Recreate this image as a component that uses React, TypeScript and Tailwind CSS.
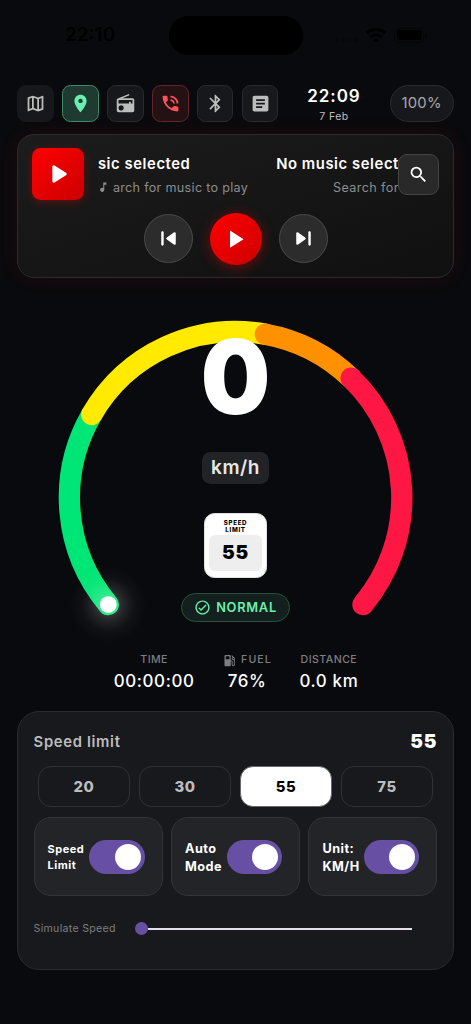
import { useState, type ReactNode } from 'react';
import clsx from 'clsx';
import {
  MdArticle,
  MdBluetooth,
  MdLocationOn,
  MdMusicNote,
  MdOutlineMap,
  MdPhoneInTalk,
  MdRadio,
  MdSearch,
} from 'react-icons/md';

const TILE_TONES = {
  plain: 'bg-[#17181b] border-[#17181b] text-[#bdbdbd]',
  default: 'bg-[#17181b] border-[#2a2b2e] text-[#bdbdbd]',
  green: 'bg-[#1f3a30] border-[#3f8a66] text-[#69f0ae]',
  red: 'bg-[#241114] border-[#66242a] text-[#ff5252]',
};

const SEGMENTS = [
  { from: 140, to: 210, color: '#00e676' },
  { from: 210, to: 280.3, color: '#ffea00' },
  { from: 280.3, to: 314, color: '#ff9100' },
  { from: 314, to: 400, color: '#ff1744' },
];

const CENTER = { x: 235.6, y: 219.7 };
const RADIUS = 166.2;

function point(deg: number) {
  const rad = (deg * Math.PI) / 180;
  return { x: CENTER.x + RADIUS * Math.cos(rad), y: CENTER.y + RADIUS * Math.sin(rad) };
}

function arc(from: number, to: number) {
  const a = point(from);
  const b = point(to);
  return `M${a.x} ${a.y}A${RADIUS} ${RADIUS} 0 0 1 ${b.x} ${b.y}`;
}

/* Black-on-dark system status bar */
function StatusBar() {
  return (
    <div className="h-[85px] pt-[15.5px] flex justify-between items-start text-black">
      <div className="w-[151px] pl-[47.5px] h-[39px] flex items-center text-[19px] font-semibold">22:10</div>
      <div className="w-[134px] h-[39px] rounded-full bg-black" />
      <div className="w-[151px] h-[39px] pl-[32px] flex items-center">
        <div className="flex gap-[3px] mt-2.5">
          {[0, 1, 2, 3].map((i) => (
            <span key={i} className="size-[3.5px] rounded-full bg-[#07080a]" />
          ))}
        </div>
        <svg className="ml-[8px] w-[20px] h-[15px]" viewBox="0 0 20 15" fill="none" stroke="currentColor">
          <path d="M1 5.2a13 13 0 0 1 18 0" strokeWidth="3" />
          <path d="M4.6 9a8 8 0 0 1 10.8 0" strokeWidth="2.8" />
          <path d="M10 14.6 6.9 11.5a4.4 4.4 0 0 1 6.2 0z" fill="currentColor" stroke="none" />
        </svg>
        <div className="ml-[8.5px] w-[30px] h-[15px] rounded-[5px] border border-[#050608] p-[1.5px]">
          <div className="h-full rounded-[3px] bg-black" />
        </div>
        <div className="ml-px w-[1.5px] h-[5px] rounded-r-full bg-[#050608]" />
      </div>
    </div>
  );
}

function Tile({ tone = 'default', children }: { tone?: keyof typeof TILE_TONES; children: ReactNode }) {
  return (
    <button
      className={clsx(
        'size-[36.5px] rounded-[8.5px] border flex items-center justify-center text-[21px]',
        TILE_TONES[tone],
      )}
    >
      {children}
    </button>
  );
}

function Toolbar() {
  return (
    <div className="flex items-center justify-between h-[37px]">
      <div className="flex gap-[8.4px]">
        <Tile tone="plain"><MdOutlineMap /></Tile>
        <Tile tone="green"><MdLocationOn /></Tile>
        <Tile><MdRadio /></Tile>
        <Tile tone="red"><MdPhoneInTalk /></Tile>
        <Tile><MdBluetooth /></Tile>
        <Tile><MdArticle /></Tile>
      </div>
      <div className="w-[56px] pt-px flex flex-col items-center whitespace-nowrap">
        <div className="text-[17px] leading-[21px] font-semibold tracking-[0.95px] text-white">22:09</div>
        <div className="mt-[3px] text-[10.5px] leading-[13px] tracking-[0.45px] text-[#bdbdbd]">7 Feb</div>
      </div>
      <div className="w-[64px] h-[37px] rounded-full border border-[#2a2b2e] bg-[#17181b] flex items-center justify-center text-[14.8px] tracking-[0.3px] text-[#a8a9aa]">
        100%
      </div>
    </div>
  );
}

function PlayGlyph({ className }: { className?: string }) {
  return (
    <svg className={className} viewBox="0 0 24 24" fill="currentColor">
      <path d="M8 6.82v10.36c0 .79.87 1.27 1.54.84l8.14-5.18a1 1 0 0 0 0-1.69L9.54 5.98A.998.998 0 0 0 8 6.82z" />
    </svg>
  );
}

function SkipGlyph({ className }: { className?: string }) {
  return (
    <svg className={className} viewBox="0 0 24 24" fill="currentColor">
      <path d="M7 6c.55 0 1 .45 1 1v10c0 .55-.45 1-1 1s-1-.45-1-1V7c0-.55.45-1 1-1zm3.66 6.82 5.77 4.07c.66.47 1.58-.01 1.58-.82V7.93c0-.81-.91-1.28-1.58-.82l-5.77 4.07a1 1 0 0 0 0 1.64z" />
    </svg>
  );
}

function MusicCard() {
  return (
    <div className="mt-[12.4px] h-[144px] rounded-[17px] border-[1.3px] border-[#2b2b2b] bg-linear-to-br from-[#1c1c1c] to-[#101010] px-[13.5px] pt-[13px] shadow-[0_0_18px_1px_rgba(255,0,0,0.09)]">
      <div className="flex items-center h-[52px]">
        <div className="size-[52px] shrink-0 rounded-[8.5px] bg-linear-to-br from-[#ff0000] to-[#cc0000] shadow-[0_2px_9px_rgba(255,0,0,0.3)] flex items-center justify-center text-white">
          <PlayGlyph className="size-[34px]" />
        </div>
        <div className="ml-[14px] pt-[1.5px] w-[300px] shrink-0 overflow-hidden whitespace-nowrap">
          <div className="flex justify-between text-[14.8px] leading-[20px] font-semibold tracking-[0.58px] text-white">
            <span>sic selected</span>
            <span className="-mr-px">No music select</span>
          </div>
          <div className="mt-[5px] flex items-center text-[12.6px] leading-[18px] tracking-[0.3px] text-[#8d8d8d]">
            <MdMusicNote className="text-[12.5px] -ml-px mr-[3.5px]" />
            <span>arch for music to play</span>
            <span className="ml-auto -mr-px tracking-[0.4px]">Search for</span>
          </div>
        </div>
        <button className="size-[41px] shrink-0 rounded-[9px] border border-[#444] bg-[#292929] flex items-center justify-center text-[21px] text-white">
          <MdSearch />
        </button>
      </div>
      <div className="mt-[12.5px] flex items-center justify-center gap-[17px] pl-[0.5px] text-white">
        <button className="size-[49px] rounded-full border border-[#4b4b4b] bg-[#2c2c2c] flex items-center justify-center">
          <SkipGlyph className="size-[29px]" />
        </button>
        <button className="size-[52px] rounded-full bg-linear-to-br from-[#ff0000] to-[#cc0000] shadow-[0_2px_13px_rgba(255,0,0,0.4)] flex items-center justify-center">
          <svg className="size-[32px]" viewBox="0 0 24 24" fill="currentColor">
            <path d="M7.500 5.700v12.800l10.200-6.400z" />
          </svg>
        </button>
        <button className="size-[49px] rounded-full border border-[#4b4b4b] bg-[#2c2c2c] flex items-center justify-center">
          <SkipGlyph className="size-[29px] -scale-x-100" />
        </button>
      </div>
    </div>
  );
}

/* Speedometer: arc behind, readouts stacked in the middle */
function Gauge() {
  const knob = point(140);
  return (
    <div className="relative h-[371px] -mx-[17.4px] flex flex-col items-center">
      <svg className="absolute left-0 top-0" width="471" height="370" viewBox="0 0 471 370" fill="none">
        <defs>
          <radialGradient id="glow">
            <stop offset="0.2" stopColor="#fff" stopOpacity="0.2" />
            <stop offset="0.45" stopColor="#fff" stopOpacity="0.1" />
            <stop offset="0.7" stopColor="#fff" stopOpacity="0.03" />
            <stop offset="1" stopColor="#fff" stopOpacity="0" />
          </radialGradient>
        </defs>
        {SEGMENTS.map((s) => (
          <path key={s.color} d={arc(s.from, s.to)} stroke={s.color} strokeWidth="21.3" strokeLinecap="round" />
        ))}
        <circle cx={knob.x} cy={knob.y} r="38" fill="url(#glow)" />
        <circle cx={knob.x} cy={knob.y} r="8.4" fill="#fff" />
      </svg>
      <div className="relative mt-[46.5px] h-[104px] text-[103px] leading-[104px] font-black scale-x-[0.95] text-white">0</div>
      <div className="relative mt-[23px] w-[67px] h-[32px] rounded-[8.5px] bg-[#222326] flex items-center justify-center text-[19px] font-semibold tracking-[0.5px] text-[#e8e8e8]">
        km/h
      </div>
      <div className="relative mt-[29.5px] w-[62.5px] h-[65px] rounded-[10.5px] border border-[#e0e0e0] bg-white px-[4px] pt-[6px] text-black text-center">
        <div className="text-[6.2px] leading-[6.3px] font-extrabold tracking-[0.65px]">
          SPEED
          <br />
          LIMIT
        </div>
        <div className="mt-[2.2px] h-[36px] rounded-[6px] bg-[#eee] flex items-center justify-center text-[19px] font-black tracking-[0.9px]">
          55
        </div>
      </div>
      <div className="relative mt-[14.5px] w-[109px] h-[29px] rounded-full border border-[#28523f] bg-[#13201d] flex items-center justify-center gap-[5px] text-[12.8px] font-semibold tracking-[0.75px] text-[#69f0ae]">
        <svg className="size-[17px]" viewBox="0 0 24 24" fill="currentColor">
          <path d="M12 2C6.48 2 2 6.48 2 12s4.48 10 10 10 10-4.48 10-10S17.52 2 12 2zm0 18c-4.41 0-8-3.59-8-8s3.59-8 8-8 8 3.59 8 8-3.59 8-8 8zm3.88-11.71L10 14.17l-1.88-1.88a.996.996 0 1 0-1.41 1.41l2.59 2.59c.39.39 1.02.39 1.41 0L17.3 9.7a.996.996 0 0 0 0-1.41c-.39-.39-1.03-.39-1.42 0z" />
        </svg>
        NORMAL
      </div>
    </div>
  );
}

function Stat({ label, value, icon }: { label: string; value: string; icon?: ReactNode }) {
  return (
    <div className="flex flex-col items-center whitespace-nowrap">
      <div
        className={clsx(
          'h-[20px] flex items-center text-[10.6px] font-medium text-[#7d7e80]',
          icon ? 'tracking-[1.1px]' : 'tracking-[0.45px]',
        )}
      >
        {icon}
        {label}
      </div>
      <div className="mt-[1px] text-[16.9px] leading-[21px] font-medium tracking-[0.65px] text-white">{value}</div>
    </div>
  );
}

function PumpIcon() {
  return (
    <svg className="size-[15px] mr-[4px]" viewBox="0 0 24 24" fill="currentColor">
      <path d="m19.77 7.23.01-.01-3.19-3.19a.75.75 0 1 0-1.06 1.06l1.58 1.58c-1.05.4-1.76 1.47-1.58 2.71.16 1.1 1.1 1.99 2.2 2.11.47.05.88-.03 1.27-.2v7.21c0 .55-.45 1-1 1s-1-.45-1-1V14c0-1.1-.9-2-2-2h-1V5c0-1.1-.9-2-2-2H6c-1.1 0-2 .9-2 2v15c0 .55.45 1 1 1h8c.55 0 1-.45 1-1v-6.5h1.5v4.86c0 1.31.94 2.5 2.24 2.63A2.5 2.5 0 0 0 20.5 18.500V9c0-.69-.28-1.32-.73-1.77zM12 10H6V6c0-.55.45-1 1-1h4c.55 0 1 .45 1 1v4zm6 0c-.55 0-1-.45-1-1s.45-1 1-1 1 .45 1 1-.45 1-1 1z" />
    </svg>
  );
}

function Switch({ on, onChange }: { on: boolean; onChange: () => void }) {
  return (
    <button
      role="switch"
      aria-checked={on}
      onClick={onChange}
      className={clsx(
        'w-[55.5px] h-[34.5px] shrink-0 rounded-full px-[4px] flex items-center',
        on ? 'bg-[#6750a4] justify-end' : 'bg-[#3a3b3e] justify-start',
      )}
    >
      <span className="size-[26px] rounded-full bg-white" />
    </button>
  );
}

function ToggleCard({ lines, small }: { lines: [string, string]; small?: boolean }) {
  const [on, setOn] = useState(true);
  return (
    <div className="w-[129px] h-[79px] rounded-[17px] border border-[#333437] bg-[#232427] pl-[13px] pr-[17px] flex items-center justify-between">
      <div
        className={clsx(
          'pt-[1.500px] font-bold text-white whitespace-nowrap',
          small ? 'text-[11px] leading-[15.5px] tracking-[0.5px]' : 'text-[12.7px] leading-[18px] tracking-[0.45px]',
        )}
      >
        {lines[0]}
        <br />
        {lines[1]}
      </div>
      <Switch on={on} onChange={() => setOn(!on)} />
    </div>
  );
}

function ControlPanel() {
  const [limit, setLimit] = useState(55);
  return (
    <div className="mt-[19px] h-[258.5px] rounded-[22px] border border-[#2a2b2e] bg-[#18191c] px-[15.200px]">
      <div className="h-[54px] pt-[6px] flex items-center justify-between">
        <span className="text-[14.8px] font-semibold tracking-[0.68px] text-[#bdbdbd]">Speed limit</span>
        <span className="text-[19px] font-black tracking-[0.9px] text-white">{limit}</span>
      </div>
      <div className="flex gap-[8.700px] px-[4.300px]">
        {[20, 30, 55, 75].map((n) => (
          <button
            key={n}
            onClick={() => setLimit(n)}
            className={clsx(
              'flex-1 h-[41px] pt-px rounded-[13px] border text-[14.8px] font-extrabold tracking-[0.6px]',
              n === limit ? 'bg-white border-[#66676a] text-black' : 'border-[#303134] text-[#bdbdbd]',
            )}
          >
            {n}
          </button>
        ))}
      </div>
      <div className="mt-[10px] flex justify-between">
        <ToggleCard lines={['Speed', 'Limit']} small />
        <ToggleCard lines={['Auto', 'Mode']} />
        <ToggleCard lines={['Unit:', 'KM/H']} />
      </div>
      <div className="mt-[22px] h-[21px] flex items-center">
        <span className="w-[101.500px] shrink-0 text-[10.6px] tracking-[0.3px] text-[#7d7e80]">Simulate Speed</span>
        <div className="w-[13px] h-[13px] shrink-0 rounded-full bg-[#6750a4]" />
        <div className="w-[264px] h-[2px] bg-[#e7e0ec]" />
      </div>
    </div>
  );
}

export default function App() {
  return (
    <div className="w-[471px] h-[1024px] overflow-hidden bg-[#090a0d] px-[17.4px] font-['Inter',sans-serif]">
      <StatusBar />
      <Toolbar />
      <MusicCard />
      <Gauge />
      <div className="mt-[1px] flex justify-center gap-[27.5px] pl-px">
        <Stat label="TIME" value="00:00:00" />
        <Stat label="FUEL" value="76%" icon={<PumpIcon />} />
        <Stat label="DISTANCE" value="0.0 km" />
      </div>
      <ControlPanel />
    </div>
  );
}
